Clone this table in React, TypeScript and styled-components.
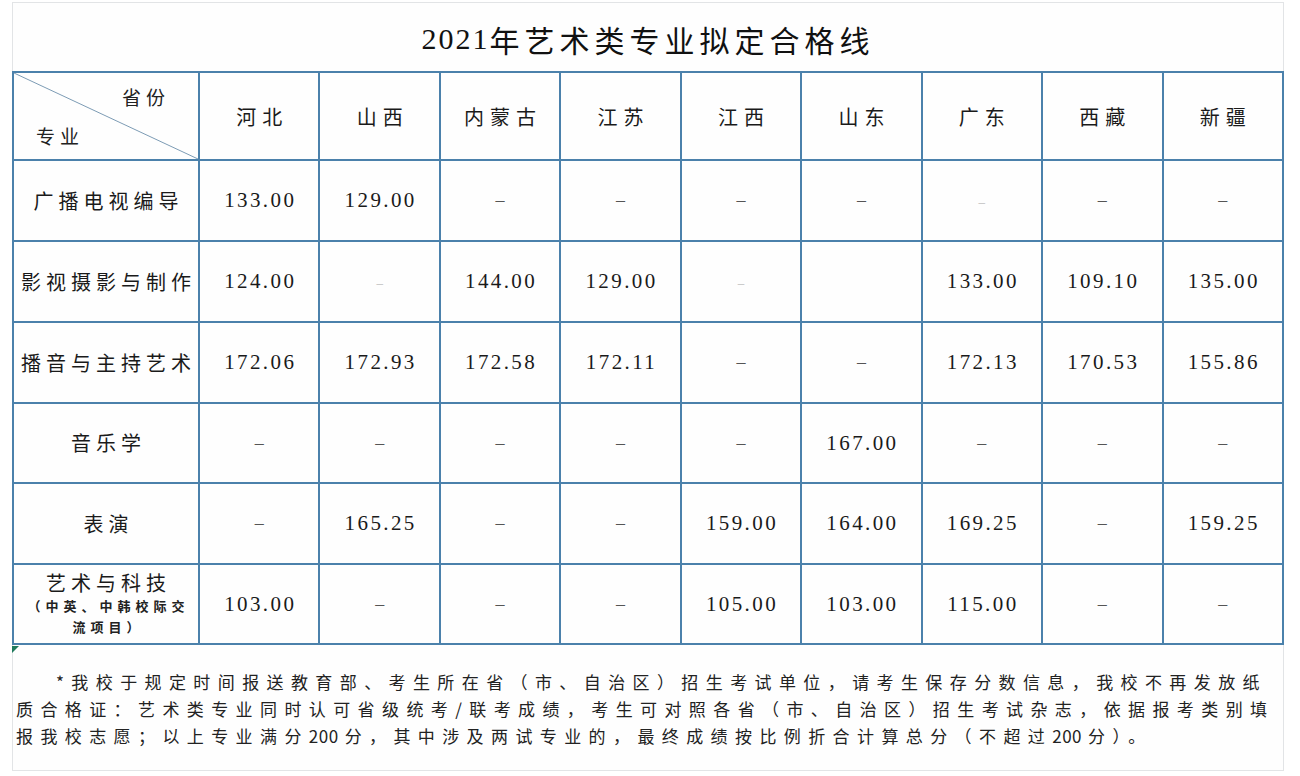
import styled, { createGlobalStyle } from 'styled-components';

// ─── Data ─────────────────────────────────────────────────────────────────────

const provinces = ['河北', '山西', '内蒙古', '江苏', '江西', '山东', '广东', '西藏', '新疆'];

// '-' = dash, '~' = faint dash, '' = empty cell
const rows: { major: string; note?: string[]; values: string[] }[] = [
    { major: '广播电视编导', values: ['133.00', '129.00', '-', '-', '-', '-', '~', '-', '-'] },
    { major: '影视摄影与制作', values: ['124.00', '~', '144.00', '129.00', '~', '', '133.00', '109.10', '135.00'] },
    { major: '播音与主持艺术', values: ['172.06', '172.93', '172.58', '172.11', '-', '-', '172.13', '170.53', '155.86'] },
    { major: '音乐学', values: ['-', '-', '-', '-', '-', '167.00', '-', '-', '-'] },
    { major: '表演', values: ['-', '165.25', '-', '-', '159.00', '164.00', '169.25', '-', '159.25'] },
    {
        major: '艺术与科技',
        note: ['（中英、中韩校际交', '流项目）'],
        values: ['103.00', '-', '-', '-', '105.00', '103.00', '115.00', '-', '-'],
    },
];

const rowHeights = [81, 81, 81, 80, 81, 80];

const footerLines = [
    '*我校于规定时间报送教育部、考生所在省（市、自治区）招生考试单位，请考生保存分数信息，我校不再发放纸',
    '质合格证：艺术类专业同时认可省级统考/联考成绩，考生可对照各省（市、自治区）招生考试杂志，依据报考类别填',
    '报我校志愿；以上专业满分200分，其中涉及两试专业的，最终成绩按比例折合计算总分（不超过200分）。',
];

// ─── Styles ───────────────────────────────────────────────────────────────────

const GlobalStyle = createGlobalStyle`
    html, body { margin: 0; padding: 0; background: #ffffff; }
    body {
        font-family: "Liberation Serif", "Noto Sans CJK SC", serif;
        color: #1c1c1c;
    }
`;

const LINE = '#4b81ab';

const Frame = styled.div`
    margin: 2px 0 0 12px;
    width: 1272px;
    height: 769px;
    border: 1px solid #e2e4e6;
    box-sizing: border-box;
    display: flex;
    flex-direction: column;
    background: #fefefe;
`;

const Title = styled.div`
    height: 68px;
    padding-top: 4px;
    box-sizing: border-box;
    display: flex;
    align-items: center;
    justify-content: center;
    font-size: 30px;
    letter-spacing: 5px;
    color: #111;
`;

const Year = styled.span`
    letter-spacing: 2px;
`;

const TableWrap = styled.div`
    position: relative;
    margin: 0 -1px;

    &::after {
        content: '';
        position: absolute;
        left: 0;
        bottom: -8px;
        width: 0;
        height: 0;
        border-top: 7px solid #1f7a5c;
        border-right: 7px solid transparent;
    }
`;

const Table = styled.table`
    width: 1272px;
    border-collapse: collapse;
    table-layout: fixed;
    border: 2px solid ${LINE};
`;

const Cell = styled.td<{ $h?: number }>`
    border: 2px solid ${LINE};
    height: ${p => (p.$h ? `${p.$h - 2}px` : 'auto')};
    padding: 0;
    text-align: center;
    vertical-align: middle;
`;

const CornerCell = styled(Cell)`
    position: relative;
`;

const Diagonal = styled.svg`
    position: absolute;
    inset: 0;
    width: 100%;
    height: 100%;
`;

const CornerInner = styled.div`
    position: relative;
    height: 86px;
    display: flex;
    flex-direction: column;
    justify-content: space-between;
    padding: 10px 28px 10px 22px;
    box-sizing: border-box;
    font-family: "Noto Sans CJK SC", sans-serif;
    font-size: 19px;
    letter-spacing: 5px;
    color: #222;
`;

const CornerTop = styled.span`
    align-self: flex-end;
`;

const CornerBottom = styled.span`
    align-self: flex-start;
`;

const Province = styled.span`
    font-family: "Noto Sans CJK SC", sans-serif;
    font-size: 20px;
    letter-spacing: 6px;
    padding-left: 6px;
    color: #1a1a1a;
`;

const Major = styled.div`
    font-family: "Noto Sans CJK SC", sans-serif;
    font-size: 20px;
    letter-spacing: 5px;
    padding-left: 5px;
    white-space: nowrap;
    color: #1a1a1a;
    line-height: 24px;
`;

const Note = styled.div`
    font-family: "Noto Sans CJK SC", sans-serif;
    font-size: 13px;
    font-weight: 700;
    letter-spacing: 5px;
    padding-left: 5px;
    line-height: 21px;
    color: #222;
    white-space: nowrap;
`;

const Score = styled.span`
    font-size: 21px;
    letter-spacing: 2.4px;
    padding-left: 2px;
    color: #1a1a1a;
`;

const Dash = styled.span<{ $faint?: boolean }>`
    font-size: ${p => (p.$faint ? '13px' : '18px')};
    color: ${p => (p.$faint ? '#b4b4b4' : '#555')};
`;

const Footer = styled.div`
    flex: 1;
    padding: 23px 0 0 3px;
    font-family: "Noto Sans CJK SC", sans-serif;
    font-size: 17px;
    line-height: 27px;
    letter-spacing: 7.4px;
    color: #222;
`;

const FooterLine = styled.div<{ $indent?: boolean }>`
    white-space: nowrap;
    padding-left: ${p => (p.$indent ? '40px' : '0')};
`;

const Digits = styled.span`
    letter-spacing: 0.5px;
    margin-right: 6px;
`;

// ─── Component ────────────────────────────────────────────────────────────────

const renderValue = (v: string) => {
    if (v === '') return null;
    if (v === '-') return <Dash>–</Dash>;
    if (v === '~') return <Dash $faint>–</Dash>;
    return <Score>{v}</Score>;
};

const renderFooterLine = (line: string) =>
    line.split(/(\d+)/).map((part, i) =>
        /^\d+$/.test(part) ? <Digits key={i}>{part}</Digits> : part
    );

const App = () => (
    <>
        <GlobalStyle />
        <Frame>
            <Title>
                <Year>2021</Year>年艺术类专业拟定合格线
            </Title>

            <TableWrap>
                <Table>
                    <colgroup>
                        <col style={{ width: 186 }} />
                        {provinces.map(p => <col key={p} />)}
                    </colgroup>
                    <tbody>
                        <tr>
                            <CornerCell $h={88}>
                                <Diagonal viewBox="0 0 100 100" preserveAspectRatio="none">
                                    <line x1="0" y1="0" x2="100" y2="100" stroke="#7c9bb4"
                                        strokeWidth="1" vectorEffect="non-scaling-stroke" />
                                </Diagonal>
                                <CornerInner>
                                    <CornerTop>省份</CornerTop>
                                    <CornerBottom>专业</CornerBottom>
                                </CornerInner>
                            </CornerCell>
                            {provinces.map(p => (
                                <Cell key={p}><Province>{p}</Province></Cell>
                            ))}
                        </tr>
                        {rows.map((r, i) => (
                            <tr key={r.major}>
                                <Cell $h={rowHeights[i]}>
                                    <Major>{r.major}</Major>
                                    {r.note && r.note.map(n => <Note key={n}>{n}</Note>)}
                                </Cell>
                                {r.values.map((v, j) => (
                                    <Cell key={j}>{renderValue(v)}</Cell>
                                ))}
                            </tr>
                        ))}
                    </tbody>
                </Table>
            </TableWrap>

            <Footer>
                {footerLines.map((l, i) => (
                    <FooterLine key={i} $indent={i === 0}>{renderFooterLine(l)}</FooterLine>
                ))}
            </Footer>
        </Frame>
    </>
);

export default App;
